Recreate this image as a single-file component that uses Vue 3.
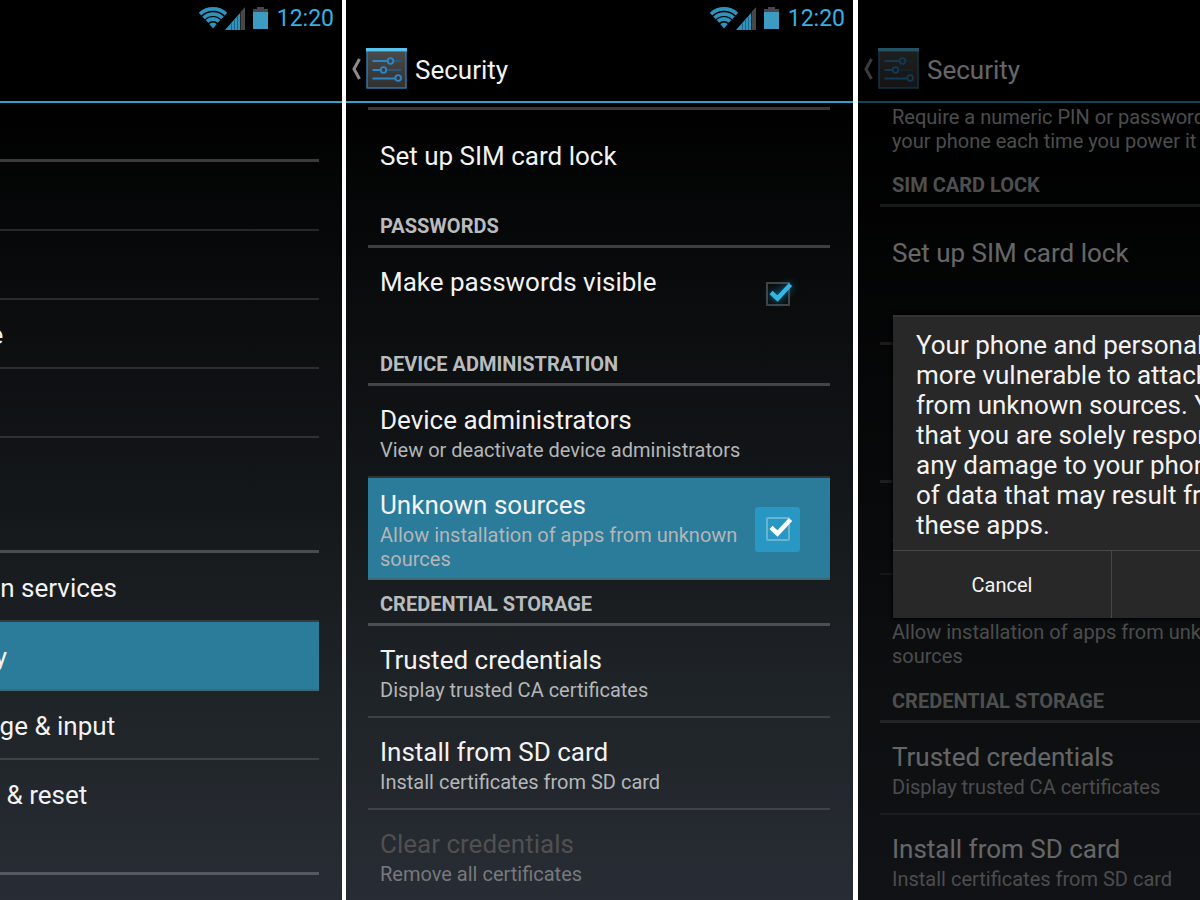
<template>
  <main class="strip">
    <section v-for="phone in phones" :key="phone.id" class="phone" :class="phone.id">
      <header class="status-bar">
        <!-- Wi-Fi -->
        <svg class="wifi" viewBox="0 0 28 22" width="28" height="22" aria-hidden="true">
          <path d="M1 7.1 A19 19 0 0 1 27 7.1" />
          <path d="M4.5 10.8 A14 14 0 0 1 23.5 10.8" />
          <path d="M7.9 14.4 A9 9 0 0 1 20.1 14.4" />
          <path class="wifi-dot" d="M10.2 17 A5.5 5.5 0 0 1 17.8 17 L14 21.5 Z" />
        </svg>
        <!-- Réseau mobile -->
        <svg class="signal" viewBox="0 0 20 23" width="20" height="23" aria-hidden="true">
          <path fill="#474747" d="M15.5 5 L20 0 V23 H15.5 Z" />
          <path fill="#2f93bd" d="M0 23 L15 6 V23 Z" />
          <path stroke="#1c6586" stroke-width="1" d="M6.5 16.5 V23 M9.5 13 V23 M12.5 9.5 V23" />
        </svg>
        <!-- Batterie -->
        <svg class="battery" viewBox="0 0 15 23" width="15" height="23" aria-hidden="true">
          <path fill="#474747" d="M4 0 H11 V2 H15 V6 H0 V2 H4 Z" />
          <rect fill="#3d9bc2" y="5" width="15" height="17" />
        </svg>
        <time class="clock">12:20</time>
      </header>

      <div class="action-bar">
        <button class="back" type="button" :aria-label="'Back from ' + phone.title">
          <svg viewBox="0 0 10 22" width="10" height="22" aria-hidden="true">
            <path fill="none" stroke="#8c8c8c" stroke-width="3" d="M8.5 1 L3 11 L8.5 21" />
          </svg>
          <svg viewBox="0 0 41 41" width="41" height="41" aria-hidden="true">
            <defs>
              <linearGradient :id="'tile-' + phone.id" x1="0" y1="0" x2="0" y2="1">
                <stop offset="0" stop-color="#4c4c4c" />
                <stop offset="1" stop-color="#303030" />
              </linearGradient>
            </defs>
            <rect x="1" y="1" width="39" height="39" :fill="`url(#tile-${phone.id})`" stroke="#2f7db0" stroke-width="1.4" />
            <rect width="41" height="3.4" fill="#55c3ee" />
            <g fill="none" stroke="#2f86c6" stroke-width="1.8">
              <path d="M6.5 13 H21.5 M6.5 22 H14.5 M6.5 30.5 H29" />
              <path stroke="#28597d" d="M27.5 13 H35 M20.5 22 H35" />
              <circle cx="24.5" cy="13" r="2.8" />
              <circle cx="17.5" cy="22" r="2.8" />
              <circle cx="32.2" cy="30" r="2.8" />
            </g>
          </svg>
        </button>
        <h1>{{ phone.title }}</h1>
      </div>

      <div class="list">
        <template v-for="(row, i) in phone.rows" :key="i">
          <hr v-if="row.rule" class="rule" />
          <h2 v-else-if="row.header">{{ row.header }}</h2>
          <p v-else-if="row.note" class="note">{{ row.note }}</p>
          <label v-else-if="row.check" class="row" :class="{ pressed: row.pressed, last: row.last }">
            <span class="text">
              <span class="title">{{ row.title }}</span>
              <span class="summary">{{ row.summary }}</span>
            </span>
            <span class="widget">
              <input type="checkbox" checked />
              <svg class="tick" viewBox="0 0 45 45" width="45" height="45" aria-hidden="true">
                <path d="M16 20.5 L22.5 26.5 L35.5 12.5" />
              </svg>
            </span>
          </label>
          <button
            v-else
            type="button"
            class="row"
            :class="{ pressed: row.pressed, last: row.last }"
            :disabled="row.disabled"
          >
            <span class="text">
              <span class="title">{{ row.title }}</span>
              <span v-if="row.summary" class="summary">{{ row.summary }}</span>
            </span>
          </button>
        </template>
      </div>

      <div v-if="phone.dialog" class="shade">
        <div class="dialog" role="alertdialog" aria-labelledby="warning">
          <p id="warning">{{ phone.dialog }}</p>
          <div class="actions">
            <button type="button">Cancel</button>
            <button type="button">OK</button>
          </div>
        </div>
      </div>
    </section>
  </main>
</template>

<script setup>
const credentials = [
  { header: 'CREDENTIAL STORAGE' },
  { title: 'Trusted credentials', summary: 'Display trusted CA certificates' },
  { title: 'Install from SD card', summary: 'Install certificates from SD card' },
]

// pressed = ligne sous le doigt
const security = (pressed) => [
  { title: 'Set up SIM card lock', last: true },
  { header: 'PASSWORDS' },
  { title: 'Make passwords visible', check: true, last: true },
  { header: 'DEVICE ADMINISTRATION' },
  { title: 'Device administrators', summary: 'View or deactivate device administrators' },
  {
    title: 'Unknown sources',
    summary: 'Allow installation of apps from unknown sources',
    check: true,
    last: true,
    pressed,
  },
  ...credentials,
]

const phones = [
  {
    id: 'settings',
    title: 'Settings',
    rows: [
      { header: 'DEVICE' },
      { title: 'Sound' },
      { title: 'Display' },
      { title: 'Storage' },
      { title: 'Battery' },
      { title: 'Apps', last: true },
      { header: 'PERSONAL' },
      { title: 'Location services' },
      { title: 'Security', pressed: true },
      { title: 'Language & input' },
      { title: 'Backup & reset', last: true },
      { header: 'SYSTEM' },
      { title: 'Date & time' },
    ],
  },
  {
    id: 'security',
    title: 'Security',
    rows: [
      { rule: true },
      ...security(true),
      { title: 'Clear credentials', summary: 'Remove all certificates', disabled: true, last: true },
    ],
  },
  {
    id: 'warning',
    title: 'Security',
    rows: [
      { note: 'Require a numeric PIN or password to decrypt your phone each time you power it on' },
      { header: 'SIM CARD LOCK' },
      ...security(false),
    ],
    dialog:
      'Your phone and personal data are more vulnerable to attack by apps from unknown sources. ' +
      'You agree that you are solely responsible for any damage to your phone or loss of data ' +
      'that may result from using these apps.',
  },
]
</script>

<style>
body {
  margin: 0;
  background: #fff;
}
</style>

<style scoped>
.strip {
  display: flex;
  justify-content: center;
  height: 100vh;
  overflow: hidden;
  background: #fff;
  font-family: Roboto, 'Liberation Sans', sans-serif;
  color: #f2f2f2;
}

.phone {
  position: relative;
  display: flex;
  flex-direction: column;
  flex: none;
  width: 42.25%;
  overflow: hidden;
  background: linear-gradient(#000 100px, #0a0c0d 300px, #14171a 500px, #1f2428 700px, #282c34 100%);
}

.phone.security {
  margin: 0 5px 0 4px;
}

button {
  border: 0;
  padding: 0;
  background: none;
  color: inherit;
  font: inherit;
  text-align: left;
}

/* Barre d'état */
.status-bar {
  display: flex;
  flex: none;
  align-items: center;
  justify-content: flex-end;
  height: 36px;
  padding-right: 8px;
  background: #000;
}

.wifi {
  margin-right: -2px;
  fill: none;
  stroke: #2f93bd;
  stroke-width: 3.8;
}

.wifi-dot {
  fill: #2f93bd;
  stroke: none;
}

.signal {
  margin-right: 8px;
}

.battery {
  margin-right: 9px;
}

.clock {
  padding-top: 2px;
  font-size: 23px;
  line-height: 34px;
  color: #36b0e0;
}

.warning .status-bar {
  visibility: hidden;
}

/* Barre d'action */
.action-bar {
  display: flex;
  flex: none;
  align-items: center;
  gap: 8px;
  height: 65px;
  padding-left: 5px;
  border-bottom: 2px solid #2da3cb;
}

.back {
  display: flex;
  align-items: center;
  gap: 5px;
}

h1 {
  margin: 0;
  padding-top: 2px;
  font-size: 26px;
  font-weight: 400;
}

/* Liste */
.list {
  flex: 1;
  min-height: 0;
  overflow: hidden;
  padding: 0 23px 0 22px;
}

.settings .list {
  padding-top: 13px;
}

.rule {
  height: 3px;
  margin: 4px 0 0;
  border: 0;
  background: rgba(255, 255, 255, 0.22);
}

h2 {
  box-sizing: border-box;
  height: 46px;
  margin: 0;
  padding: 10px 12px 0;
  border-bottom: 3px solid rgba(255, 255, 255, 0.22);
  font-size: 20px;
  line-height: 28px;
  font-weight: 700;
  color: #b9bbbd;
}

.row {
  box-sizing: border-box;
  display: flex;
  align-items: center;
  width: 100%;
  min-height: 92px;
  padding: 9px 0 7px 12px;
  border-bottom: 2px solid rgba(255, 255, 255, 0.13);
}

.row.last {
  border-bottom-color: transparent;
}

.row.pressed {
  border-bottom-color: #3d6878;
  background: #2b7b9a;
}

.settings .row {
  min-height: 69px;
  padding: 2px 0 0 57px;
}

.text {
  flex: 1;
  min-width: 0;
}

.title,
.summary {
  display: block;
}

.title {
  font-size: 26px;
  line-height: 36px;
}

.summary {
  min-height: 24px;
  font-size: 20px;
  line-height: 24px;
  color: #b4b6b8;
}

.row:disabled .title {
  color: #505050;
}

.row:disabled .summary {
  color: #77797c;
}

.note {
  margin: 0;
  padding: 2px 12px 8px;
  font-size: 20px;
  line-height: 24px;
  color: #b4b6b8;
}

/* Case à cocher */
.widget {
  position: relative;
  display: flex;
  align-items: center;
  justify-content: center;
  width: 45px;
  height: 45px;
  margin: 0 30px 0 10px;
  border-radius: 3px;
}

.widget input {
  appearance: none;
  width: 24px;
  height: 24px;
  margin: 0;
  border: 2px solid #414345;
}

.tick {
  position: absolute;
  inset: 0;
  fill: none;
  stroke: #33b5e5;
  stroke-width: 4.5;
  filter: drop-shadow(0 0 4px #1681ab);
}

.pressed .widget {
  background: #2997c3;
}

.pressed .widget input {
  border-color: #68b5d2;
  border-radius: 2px;
}

.pressed .tick {
  stroke: #fff;
  filter: none;
}

/* Avertissement */
.shade {
  position: absolute;
  inset: 0;
  display: flex;
  align-items: center;
  padding: 33px 35px 0;
  background: rgba(0, 0, 0, 0.58);
}

.dialog {
  flex: 1;
  background: #282828;
  box-shadow: 0 0 3px 1px #000, inset 0 2px #333;
}

.dialog p {
  margin: 0;
  padding: 15px 8px 10px 23px;
  font-size: 26px;
  line-height: 30px;
}

.actions {
  display: flex;
  border-top: 1px solid #484848;
}

.actions button {
  flex: 1;
  height: 67px;
  font-size: 20px;
  text-align: center;
}

.actions button + button {
  border-left: 1px solid #484848;
}
</style>
